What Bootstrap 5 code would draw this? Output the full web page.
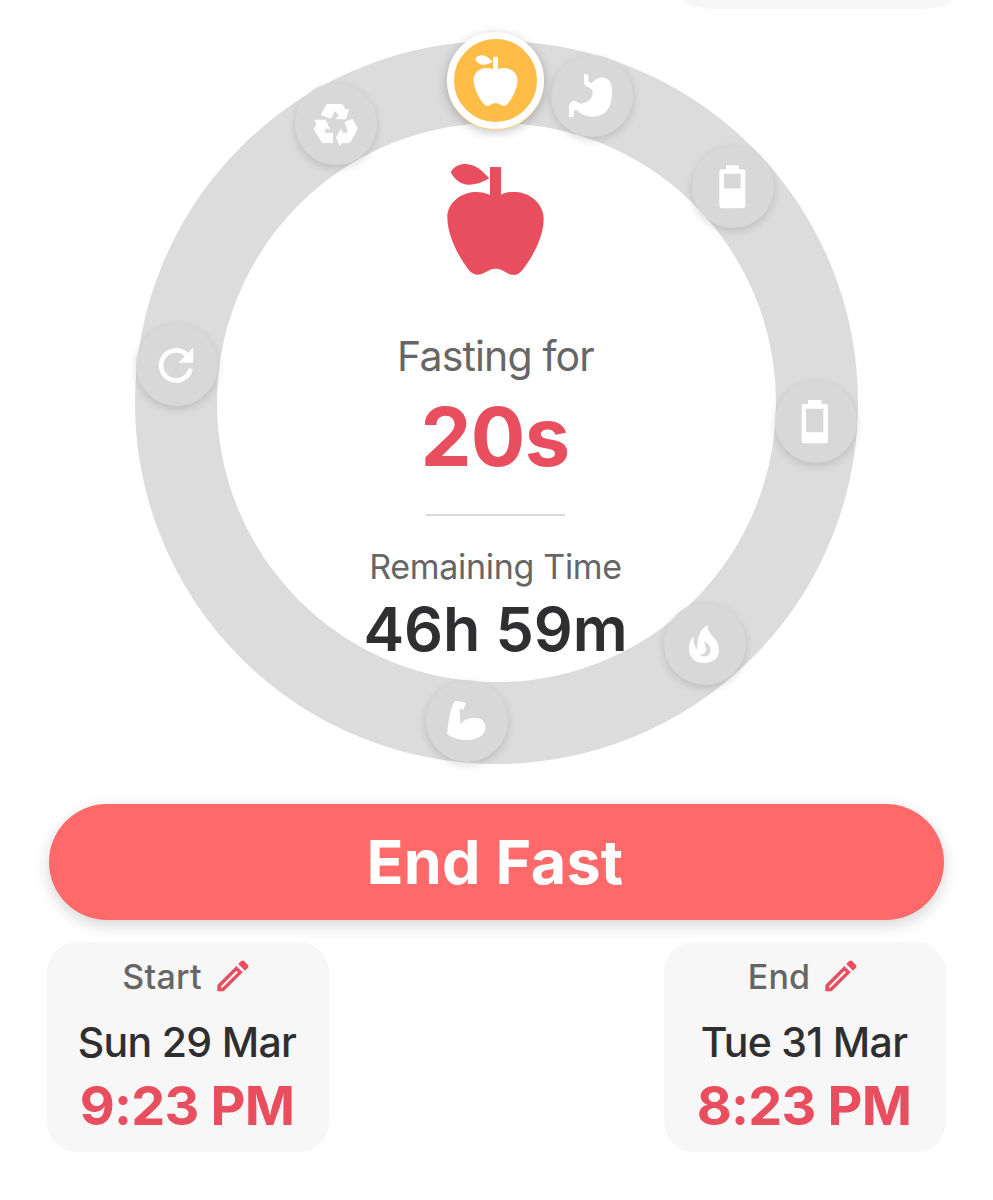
<!DOCTYPE html>
<html lang="en">
<head>
<meta charset="utf-8">
<meta name="viewport" content="width=device-width, initial-scale=1">
<title>Fasting timer</title>
<link href="https://cdn.jsdelivr.net/npm/bootstrap@5.3.0/dist/css/bootstrap.min.css" rel="stylesheet">
<style>
  :root { --accent: #e84e5d; --ink: #2f2f31; --soft: #666; --track: #dcdcdc; --panel: #f7f7f7; }
  body { font-family: Inter, "Liberation Sans", sans-serif; background: #fff; color: var(--ink); overflow: hidden; }
  .screen { width: 993px; height: 1200px; overflow: hidden; }
  .top-panel { width: 268px; height: 9px; margin-right: 42px; background: var(--panel); border-radius: 0 0 32px 32px / 0 0 9px 9px; }
  .ring { width: 723px; height: 723px; margin: 32px 0 0 135px; border: 82px solid var(--track); border-radius: 50%; }
  .ring-body { margin: 0 -40px; white-space: nowrap; transform: translateX(-1px); }
  .marker { left: calc(var(--x) * 1px - 258.5px); top: calc(var(--y) * 1px - 164px); width: 82px; height: 82px; border-radius: 50%; background: #d8d8d8; box-shadow: 0 3px 8px rgba(0,0,0,.14); }
  .marker.current { left: calc(var(--x) * 1px - 265.5px); top: calc(var(--y) * 1px - 172px); width: 97px; height: 97px; background: #ffbc47; border: 7px solid #fff; box-shadow: 0 1px 0 #ffcf80, 0 3px 11px rgba(0,0,0,.25); }
  .marker svg { display: block; width: 82px; height: 82px; fill: #fff; }
  .marker.current svg { width: 97px; height: 97px; margin: -7px; }
  .big-apple { width: 130px; height: 140px; margin: 27px 2px 0 0; fill: var(--accent); }
  .accent { color: var(--accent); }
  .soft { color: var(--soft); }
  .state-label { font-size: 41px; line-height: 50px; margin-top: 41px; letter-spacing: -.85px; }
  .elapsed { font-size: 81px; line-height: 90px; font-weight: 700; margin-top: 11px; letter-spacing: -.6px; margin-right: 1px; }
  .rule { width: 139px; height: 2px; background: #dadada; margin-top: 32px; }
  .left-label { font-size: 34px; line-height: 40px; margin-top: 31px; letter-spacing: -.3px; }
  .left-time { font-size: 61px; line-height: 70px; font-weight: 600; margin-top: 7px; letter-spacing: -.1px; }
  .end-btn { width: 895px; height: 116px; margin: 40px 0 0 49px; padding: 0 3px 0 0; border: 0; border-radius: 60px; background: #ff6969; color: #fff; font-size: 61px; line-height: 1; font-weight: 700; letter-spacing: .3px; box-shadow: 0 5px 16px rgba(0,0,0,.17); }
  .end-btn:hover { background: #ff6969; color: #fff; }
  .cards { margin: 22px 47px 0; }
  .time-card { width: 282px; height: 210px; padding-right: 2px; border-radius: 30px; background: var(--panel); white-space: nowrap; }
  .time-card .head { height: 40px; margin: 14px 3px 0 0; font-size: 34px; font-weight: 500; gap: 15px; letter-spacing: .2px; }
  .time-card .head svg { width: 32px; height: 32px; }
  .time-card .date { font-size: 41px; line-height: 50px; font-weight: 500; margin-top: 21px; letter-spacing: -.7px; }
  .time-card .clock { font-size: 54px; line-height: 64px; font-weight: 700; margin-top: 7px; letter-spacing: -.8px; }
</style>
</head>
<body>
<svg width="0" height="0" class="position-absolute">
  <symbol id="apple" viewBox="0 0 390 420">
    <path d="M62 66C73 49 88 41 107 42C137 43 155 61 178 85C159 96 142 104 117 104C90 104 72 86 62 66Z"/>
    <path d="M180 51H213V134C230 127 241 125 258 126C304 129 341 164 341 206C341 263 305 325 278 359C266 375 250 378 236 371C219 362 211 356 197 356C182 356 174 363 160 370C144 378 128 374 116 359C86 321 52 257 52 202C52 161 89 129 134 126C151 125 166 129 180 135Z"/>
  </symbol>
  <symbol id="pencil" viewBox="0 0 96 96">
    <path fill="#e84e5d" fill-rule="evenodd" d="M1 75L58 18L77 37L20 94H1ZM12 79V83H16L63 37L58 32Z"/>
    <path fill="#e84e5d" d="M64 12L72 4Q77-1 82 4L92 14Q97 19 92 24L84 32Z"/>
  </symbol>
</svg>

<main class="screen">
  <div class="top-panel ms-auto"></div>

  <section class="ring position-relative">
    <div class="ring-body d-flex flex-column align-items-center">
      <svg class="big-apple flex-shrink-0"><use href="#apple"/></svg>
      <div class="state-label soft">Fasting for</div>
      <div class="elapsed accent">20s</div>
      <div class="rule"></div>
      <div class="left-label soft">Remaining Time</div>
      <div class="left-time">46h 59m</div>
    </div>

    <div class="marker position-absolute" style="--x:592;--y:96">
      <svg viewBox="363 105 246 246"><path d="M462 163H475V181Q475 188 486 189C495 176 508 172 520 173C537 175 546 188 546 211C546 261 531 290 486 290C459 290 448 275 439 270Q431 270 431 279V291H417V264C417 248 425 242 433 242C442 242 446 253 459 250C477 246 489 233 488 217C487 207 481 205 474 202C464 197 462 192 462 181Z"/></svg>
    </div>
    <div class="marker position-absolute" style="--x:733;--y:186.5">
      <svg viewBox="36 31.5 246 246"><path fill-rule="evenodd" d="M138 89H176V101H188Q196 101 196 109V210Q196 218 188 218H126Q118 218 118 210V109Q118 101 126 101H138ZM132 115V159H182V115Z"/></svg>
    </div>
    <div class="marker position-absolute" style="--x:816;--y:422">
      <svg viewBox="30 33 246 246"><path fill-rule="evenodd" d="M129 90H170V102H181Q189 102 189 110V212Q189 220 181 220H118Q110 220 110 212V110Q110 102 118 102H129ZM123 116V187H175V116Z"/></svg>
    </div>
    <div class="marker position-absolute" style="--x:705;--y:644">
      <svg viewBox="42 39 246 246"><path fill-rule="evenodd" d="M173 105C171 138 207 141 207 181C207 205 189 219 163 219C134 219 117 201 117 176C117 160 122 149 131 139C129 155 133 170 142 180C141 150 146 120 173 105ZM163 155C165 170 174 181 165 188C158 193 153 194 149 193C154 203 176 203 181 186C185 172 175 158 163 155Z"/></svg>
    </div>
    <div class="marker position-absolute" style="--x:467.5;--y:721">
      <svg viewBox="34.5 30 246 246"><path d="M120 94Q121 92 126 93L154 98L147 120L135 117L138 164C147 150 162 143 178 143C199 143 213 154 213 172C213 196 189 210 157 210C130 210 109 202 98 192C101 160 106 121 120 94Z"/></svg>
    </div>
    <div class="marker position-absolute" style="--x:177.5;--y:365">
      <svg viewBox="34.5 42 246 246"><path fill="none" stroke="#fff" stroke-width="14" stroke-linecap="round" d="M197 182A45 45 0 1 1 185 133"/><path d="M206 113V158H162Z"/></svg>
    </div>
    <div class="marker position-absolute" style="--x:336;--y:124">
      <svg viewBox="30 39 246 246">
        <path d="M107 135L123 106Q125 102 130 102H168Q173 102 176 107L182 119L193 117L182 148L151 147L162 137L150 123L138 146Z"/>
        <path d="M88 149H122L136 180L123 175L118 188H144V219H117Q111 219 108 213L88 181Q86 177 89 172L95 161Z"/>
        <path d="M178 157L202 146L216 171Q219 177 215 183L199 212Q196 219 189 219H171L165 229L153 203L168 175L173 188H187L187 179Z"/>
      </svg>
    </div>
    <div class="marker current position-absolute" style="--x:495.5;--y:81">
      <svg viewBox="51 37.5 291 291"><use href="#apple" x="107" y="88" width="178" height="192"/></svg>
    </div>
  </section>

  <button type="button" class="end-btn btn d-flex align-items-center justify-content-center">End Fast</button>

  <section class="cards d-flex justify-content-between">
    <div class="time-card d-flex flex-column align-items-center">
      <div class="head soft d-flex align-items-center"><span>Start</span><svg><use href="#pencil"/></svg></div>
      <div class="date">Sun 29 Mar</div>
      <div class="clock accent">9:23 PM</div>
    </div>
    <div class="time-card d-flex flex-column align-items-center">
      <div class="head soft d-flex align-items-center"><span>End</span><svg><use href="#pencil"/></svg></div>
      <div class="date">Tue 31 Mar</div>
      <div class="clock accent">8:23 PM</div>
    </div>
  </section>
</main>
<script src="https://cdn.jsdelivr.net/npm/bootstrap@5.3.0/dist/js/bootstrap.bundle.min.js"></script>
</body>
</html>
